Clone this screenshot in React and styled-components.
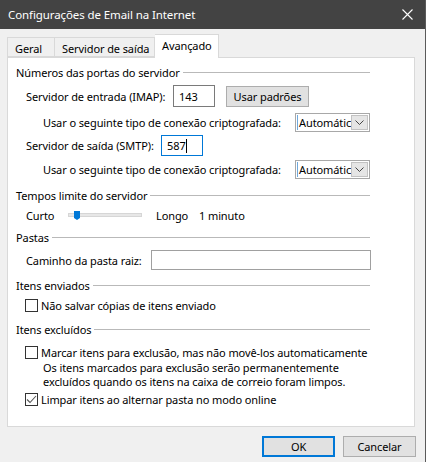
import React from "react";
import styled, { createGlobalStyle } from "styled-components";

const Global = createGlobalStyle`
  html, body { margin: 0; padding: 0; }
  body {
    font-family: "Noto Sans", "Open Sans", sans-serif;
    font-size: 11px;
    letter-spacing: -0.1px;
    color: #000;
    background: #f0f0f0;
  }
`;

const Window = styled.div`
  width: 426px;
  height: 462px;
  box-sizing: border-box;
  background: #f0f0f0;
  border-right: 1px solid #5a5a5a;
  display: flex;
  flex-direction: column;
  overflow: hidden;
  white-space: nowrap;
`;

const TitleBar = styled.div`
  height: 29px;
  flex: none;
  background: #434343;
  color: #fff;
  display: flex;
  align-items: center;
  justify-content: space-between;
  padding: 0 12px 0 8px;
  font-size: 11.5px;
`;

const Body = styled.div`
  padding: 5px 10px 0 7px;
  display: flex;
  flex-direction: column;
`;

const Tabs = styled.div`
  display: flex;
  align-items: flex-end;
  height: 23px;
  position: relative;
  z-index: 1;
`;

const Tab = styled.div`
  box-sizing: border-box;
  width: ${(p) => p.$w}px;
  height: ${(p) => (p.$active ? 24 : 20)}px;
  margin-bottom: ${(p) => (p.$active ? -1 : 0)}px;
  padding: 3px 0 0 7px;
  background: ${(p) => (p.$active ? "#fff" : "#f0f0f0")};
  border: 1px solid #d9d9d9;
  border-bottom: ${(p) => (p.$active ? "none" : "1px solid #d9d9d9")};
  border-left: ${(p) => (p.$noLeft ? "none" : "1px solid #d9d9d9")};
`;

const Panel = styled.div`
  box-sizing: border-box;
  height: 370px;
  background: #fff;
  border: 1px solid #d9d9d9;
  padding: 7px 44px 0 8px;
  display: flex;
  flex-direction: column;
`;

const Group = styled.div`
  display: flex;
  align-items: center;
  height: 14px;
  margin-top: ${(p) => p.$mt || 0}px;
  gap: 3px;
  &::after {
    content: "";
    flex: 1;
    height: 1px;
    background: #b9b9b9;
  }
`;

const Row = styled.div`
  display: flex;
  align-items: center;
  height: ${(p) => p.$h}px;
  margin-top: ${(p) => p.$mt}px;
  padding-left: ${(p) => p.$indent ?? 10}px;
  gap: ${(p) => p.$gap ?? 10}px;
  & > * { flex: none; }
`;

const Label = styled.span`
  display: inline-block;
  width: ${(p) => p.$w}px;
`;

const TextBox = styled.div`
  box-sizing: border-box;
  width: ${(p) => p.$w}px;
  height: ${(p) => p.$h}px;
  border: 1px solid ${(p) => (p.$focus ? "#0078d7" : p.$light ? "#a0a0a0" : "#7a7a7a")};
  background: #fff;
  padding-left: 5px;
  display: flex;
  align-items: center;
`;

const Caret = styled.span`
  display: inline-block;
  width: 1px;
  height: 14px;
  background: #000;
`;

const Button = styled.div`
  box-sizing: border-box;
  width: ${(p) => p.$w}px;
  height: ${(p) => p.$h}px;
  margin-left: ${(p) => p.$ml || 0}px;
  background: #e1e1e1;
  border: ${(p) => (p.$default ? "2px solid #0078d7" : "1px solid #adadad")};
  display: flex;
  align-items: center;
  justify-content: center;
`;

const Select = styled.div`
  box-sizing: border-box;
  width: 75px;
  height: 19px;
  border: 1px solid #a8a8a8;
  background: #fff;
  display: flex;
  align-items: stretch;
  padding: 1px;
`;

const SelectText = styled.div`
  flex: 1;
  overflow: hidden;
  border-left: 1px solid #6fa8dc;
  padding-left: 1px;
  display: flex;
  align-items: center;
`;

const SelectArrow = styled.div`
  width: 15px;
  background: #e5e5e5;
  border: 1px solid #c2c2c2;
  display: flex;
  align-items: center;
  justify-content: center;
`;

const Track = styled.div`
  position: relative;
  box-sizing: border-box;
  width: 74px;
  height: 4px;
  background: #e7e7e7;
  border: 1px solid #d6d6d6;
`;

const Thumb = styled.div`
  position: absolute;
  left: 5px;
  top: -3px;
  width: 6px;
  height: 7px;
  background: #0078d7;
  &::after {
    content: "";
    position: absolute;
    left: 0;
    top: 7px;
    border-left: 3px solid transparent;
    border-right: 3px solid transparent;
    border-top: 2px solid #0078d7;
  }
`;

const Box = styled.div`
  box-sizing: border-box;
  width: 13px;
  height: 13px;
  border: 1px solid #333;
  background: #fff;
  display: flex;
  align-items: center;
  justify-content: center;
`;

const Note = styled.div`
  margin-top: 2px;
  padding-left: 27px;
  line-height: 14px;
`;

const Footer = styled.div`
  display: flex;
  justify-content: flex-end;
  gap: 8px;
  padding: 9px 0 0 0;
  margin-right: -1px;
`;

const Check = ({ checked }) => (
  <Box>
    {checked && (
      <svg width="11" height="11" viewBox="0 0 11 11">
        <path d="M1 5.5 L4 8.5 L10 2" fill="none" stroke="#555" strokeWidth="1.1" />
      </svg>
    )}
  </Box>
);

const Dropdown = () => (
  <Select>
    <SelectText>Automátic</SelectText>
    <SelectArrow>
      <svg width="9" height="6" viewBox="0 0 9 6">
        <path d="M0.5 0.5 L4.5 4.5 L8.5 0.5" fill="none" stroke="#444" strokeWidth="1" />
      </svg>
    </SelectArrow>
  </Select>
);

export default function App() {
  return (
    <Window>
      <Global />
      <TitleBar>
        <span>Configurações de Email na Internet</span>
        <svg width="11" height="11" viewBox="0 0 11 11">
          <path d="M0.5 0.5 L10.5 10.5 M10.5 0.5 L0.5 10.5" stroke="#fff" strokeWidth="1.1" />
        </svg>
      </TitleBar>
      <Body>
        <Tabs>
          <Tab $w={48}>Geral</Tab>
          <Tab $w={100} $noLeft>Servidor de saída</Tab>
          <Tab $w={64} $active $noLeft>Avançado</Tab>
        </Tabs>
        <Panel>
          <Group>Números das portas do servidor</Group>
          <Row $h={22} $mt={6}>
            <Label $w={137}>Servidor de entrada (IMAP):</Label>
            <TextBox $w={42} $h={22}>143</TextBox>
            <Button $w={83} $h={21} $ml={1}>Usar padrões</Button>
          </Row>
          <Row $h={19} $mt={6} $indent={27} $gap={9}>
            <Label $w={243}>Usar o seguinte tipo de conexão criptografada:</Label>
            <Dropdown />
          </Row>
          <Row $h={21} $mt={3}>
            <Label $w={125}>Servidor de saída (SMTP):</Label>
            <TextBox $w={42} $h={21} $focus>
              587
              <Caret />
            </TextBox>
          </Row>
          <Row $h={19} $mt={4} $indent={27} $gap={9}>
            <Label $w={243}>Usar o seguinte tipo de conexão criptografada:</Label>
            <Dropdown />
          </Row>
          <Group $mt={9}>Tempos limite do servidor</Group>
          <Row $h={16} $mt={5} $gap={0}>
            <Label $w={42}>Curto</Label>
            <Track>
              <Thumb />
            </Track>
            <Label $w={14} />
            <Label $w={43}>Longo</Label>
            <span>1 minuto</span>
          </Row>
          <Group $mt={7}>Pastas</Group>
          <Row $h={20} $mt={6}>
            <Label $w={115}>Caminho da pasta raiz:</Label>
            <TextBox $w={220} $h={20} $light />
          </Row>
          <Group $mt={8}>Itens enviados</Group>
          <Row $h={14} $mt={6} $indent={9} $gap={3}>
            <Check />
            <span>Não salvar cópias de itens enviado</span>
          </Row>
          <Group $mt={10}>Itens excluídos</Group>
          <Row $h={14} $mt={9} $indent={9} $gap={3}>
            <Check />
            <span>Marcar itens para exclusão, mas não movê-los automaticamente</span>
          </Row>
          <Note>
            Os itens marcados para exclusão serão permanentemente
            <br />
            excluídos quando os itens na caixa de correio foram limpos.
          </Note>
          <Row $h={14} $mt={3} $indent={9} $gap={3}>
            <Check checked />
            <span>Limpar itens ao alternar pasta no modo online</span>
          </Row>
        </Panel>
        <Footer>
          <Button $w={73} $h={21} $default>OK</Button>
          <Button $w={73} $h={21}>Cancelar</Button>
        </Footer>
      </Body>
    </Window>
  );
}
